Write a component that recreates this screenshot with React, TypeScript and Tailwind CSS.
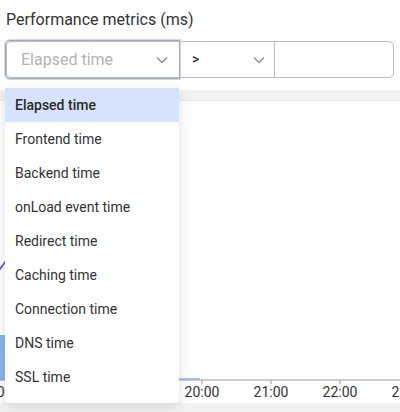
import React from "react";

const options = [
  "Elapsed time",
  "Frontend time",
  "Backend time",
  "onLoad event time",
  "Redirect time",
  "Caching time",
  "Connection time",
  "DNS time",
  "SSL time",
];

const Chevron: React.FC = () => (
  <svg width="12" height="8" viewBox="0 0 12 8" fill="none" stroke="#8a8a8a" strokeWidth="1.3">
    <path d="M1 1.5l5 5 5-5" />
  </svg>
);

const ticks = [
  { x: 202, label: "20:00" },
  { x: 271, label: "21:00" },
  { x: 340, label: "22:00" },
  { x: 409, label: "23:00" },
  { x: 133, label: "19:00" },
  { x: 64, label: "18:00" },
  { x: -5, label: "17:00" },
];

export default function App() {
  return (
    <div
      className="relative w-[400px] h-[412px] overflow-hidden bg-[#f2f2f2] text-[#333]"
      style={{ fontFamily: "Roboto, 'Noto Sans', sans-serif" }}
    >
      <div className="h-[90px] bg-white px-[6px] pt-[8px]">
        <div className="text-[16px] leading-[24px] text-[#333]">Performance metrics (ms)</div>
        <div className="mt-[9px] flex h-[37px] rounded-[5px] border border-[#bdbdbd]">
          <div className="relative flex w-[173px] items-center justify-between rounded-l-[4px] pl-[15px] pr-[11px] ring-2 ring-[#c9d8fa] outline outline-1 outline-[#a9a9a9] -m-px h-[37px]">
            <span className="text-[16px] text-[#b3b3b3]">Elapsed time</span>
            <Chevron />
          </div>
          <div className="flex w-[97px] items-center justify-between border-r border-[#bdbdbd] pl-[14px] pr-[9px]">
            <span className="text-[14px] font-medium text-[#333]">&gt;</span>
            <Chevron />
          </div>
          <div className="flex-1" />
        </div>
      </div>
      <div className="mt-[10px] h-[303px] border-t border-[#e6e6e6] bg-white">
        <svg width="400" height="303" viewBox="0 0 400 303">
          <rect x="-10" y="234" width="15" height="45" fill="#8ab6ee" />
          <polyline points="-10,180 0,168 6,160" fill="none" stroke="#7b5cf0" strokeWidth="2" />
          <line x1="0" y1="279" x2="400" y2="279" stroke="#9a9a9a" strokeWidth="1" />
          <line x1="178" y1="278" x2="200" y2="278" stroke="#8ab6ee" strokeWidth="1.5" />
          {ticks.map((t) => (
            <g key={t.label}>
              <line x1={t.x} y1="279" x2={t.x} y2="283" stroke="#9a9a9a" />
              <text x={t.x} y="296" textAnchor="middle" fontSize="14" fill="#333" fontFamily="Roboto, sans-serif">
                {t.label}
              </text>
            </g>
          ))}
        </svg>
      </div>

      <div className="absolute left-[5px] top-[88px] w-[174px] rounded-b-[6px] bg-white pb-[9px] shadow-[0_4px_14px_rgba(0,0,0,0.12)]">
        {options.map((o, i) => (
          <div
            key={o}
            className={
              i === 0
                ? "flex h-[34px] items-center bg-[#d7e3fc] pl-[10px] text-[14px] font-medium text-[#2a2a2a]"
                : "flex h-[34px] items-center pl-[10px] text-[14px] text-[#333]"
            }
          >
            {o}
          </div>
        ))}
      </div>
    </div>
  );
}
